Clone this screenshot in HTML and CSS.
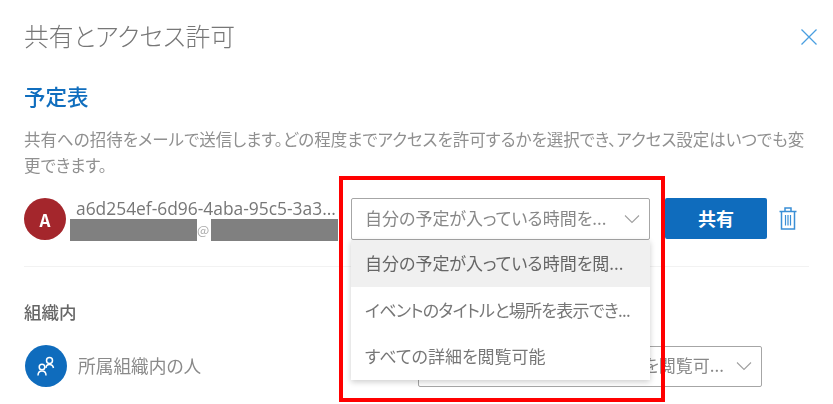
FILE: index.html
```html
<!DOCTYPE html>
<html lang="ja">
<head>
  <meta charset="UTF-8" />
  <title>共有とアクセス許可</title>
  <link rel="stylesheet" href="styles.css">
</head>
<body>
  <div class="dialog">
    <header class="dialog-head">
      <h1>共有とアクセス許可</h1>
      <svg class="close" width="16" height="16" viewBox="0 0 16 16"><path d="M0.500 0.500L15.500 15.500M15.500 0.500L0.500 15.500" stroke="#4a9fe0" stroke-width="1.300" fill="none"/></svg>
    </header>

    <h2>予定表</h2>
    <p class="desc">共有への招待をメールで送信します。どの程度までアクセスを許可するかを選択でき、アクセス設定はいつでも変更できます。</p>

    <div class="share-row">
      <div class="avatar red">A</div>
      <div class="who">
        <div class="who-name">a6d254ef-6d96-4aba-95c5-3a3...</div>
        <div class="who-mail"><span class="redact"></span><span class="at">@</span><span class="redact"></span></div>
      </div>
      <div class="select wide">
        <span>自分の予定が入っている時間を...</span>
        <svg width="16" height="10" viewBox="0 0 16 10"><path d="M1 1.500L8 8.500L15 1.500" stroke="#a0a0a0" stroke-width="1.100" fill="none"/></svg>
      </div>
      <button class="share-btn">共有</button>
      <svg class="trash" width="18" height="23" viewBox="0 0 18 23" fill="none" stroke="#3a8fd6" stroke-width="1.500"><path d="M0.500 4.500H17.500M6 4.500V1H12V4.500M2.500 4.500V22H15.500V4.500"/><path d="M6.500 8V18.500M9 8V18.500M11.500 8V18.500" stroke-width="1.200"/></svg>
    </div>

    <hr>

    <h3>組織内</h3>
    <div class="org-row">
      <div class="avatar blue">
        <svg width="22" height="22" viewBox="0 0 22 22" fill="none" stroke="#fff" stroke-width="1.500"><circle cx="14.500" cy="5.500" r="3"/><path d="M11 13C11 10.500 12.500 9.500 14.500 9.500C16.500 9.500 18 10.500 18.500 13"/><circle cx="7" cy="12" r="2.800"/><path d="M3 20.500C3 18 4.500 16 7 16C9.500 16 11 18 11 20.500"/></svg>
      </div>
      <div class="org-name">所属組織内の人</div>
      <div class="select org">
        <span>自分の予定が入っている時間を閲覧可...</span>
        <svg width="16" height="10" viewBox="0 0 16 10"><path d="M1 1.500L8 8.500L15 1.500" stroke="#a0a0a0" stroke-width="1.100" fill="none"/></svg>
      </div>
    </div>
  </div>

  <!-- dropdown open over the page -->
  <ul class="menu">
    <li class="on">自分の予定が入っている時間を閲...</li>
    <li class="tight">イベントのタイトルと場所を表示でき...</li>
    <li>すべての詳細を閲覧可能</li>
  </ul>

  <!-- red highlight on the screenshot -->
  <div class="mark"></div>
</body>
</html>
```

FILE: styles.css
```css
html, body {
  margin: 0;
  height: 404px;
  overflow: hidden;
  background: white;
}

body {
  font-family: "Noto Sans CJK JP", "Noto Sans", sans-serif;
  font-feature-settings: "palt";
  color: #777;
  position: relative;
}

/* the source picture is a soft upscale */
.dialog, .menu {
  filter: blur(0.35px);
}

.dialog {
  padding: 0 24px;
}

.dialog-head {
  display: flex;
  justify-content: space-between;
  align-items: center;
  height: 74px;
}

.dialog-head h1 {
  margin: 0 0 4px;
  font-size: 24.800px;
  font-weight: 300;
  color: #777;
}

.close {
  margin-right: -8px;
}

h2 {
  margin: -1px 0 0;
  height: 46px;
  line-height: 46px;
  font-size: 21.500px;
  font-weight: 500;
  color: #106ebe;
}

.desc {
  margin: 0;
  padding-top: 7px;
  font-size: 16.500px;
  line-height: 26px;
  color: #909090;
}

.share-row {
  display: flex;
  align-items: flex-start;
  margin-top: 20px;
  height: 42px;
}

.avatar {
  width: 42px;
  height: 42px;
  border-radius: 50%;
  flex: none;
  display: flex;
  align-items: center;
  justify-content: center;
  color: white;
}

.avatar.red {
  background: #a4262c;
  font-size: 17px;
  font-weight: 700;
}

.avatar.blue {
  background: #0f6cbd;
  margin-left: 1px;
}

.who {
  width: 281px;
  margin-left: 4px;
  flex: none;
}

.who-name {
  padding-left: 6px;
  font-family: "Open Sans", sans-serif;
  font-size: 17.400px;
  line-height: 21px;
  color: #777;
  white-space: nowrap;
}

.who-mail {
  display: flex;
  height: 22px;
  color: #aaa;
  font-size: 13px;
  line-height: 22px;
}

.redact {
  width: 127px;
  background: #808080;
}

.at {
  width: 14px;
}

.select {
  box-sizing: border-box;
  height: 42px;
  border: 1px solid #a6a6a6;
  border-radius: 2px;
  background: white;
  display: flex;
  align-items: center;
  justify-content: space-between;
  font-size: 17px;
  line-height: 38px;
  color: #888;
  white-space: nowrap;
  overflow: hidden;
}

.select span {
  padding-bottom: 2px;
}

.select.wide {
  width: 299px;
  flex: none;
  padding: 0 9px 0 13px;
}

.share-btn {
  width: 102px;
  height: 41px;
  margin-left: 15px;
  padding: 0 0 2px;
  border: none;
  border-radius: 2px;
  background: #0f6cbd;
  color: white;
  font-family: inherit;
  font-size: 18px;
  font-weight: 700;
  flex: none;
}

.trash {
  margin: 9px 0 0 12px;
  flex: none;
}

hr {
  border: none;
  border-top: 1px solid #f2f2f2;
  margin: 26px 0 0;
}

h3 {
  margin: 33px 0 0;
  height: 24px;
  line-height: 24px;
  font-size: 17.500px;
  font-weight: 500;
  color: #666;
}

.org-row {
  display: flex;
  align-items: center;
  margin-top: 21px;
}

.org-name {
  width: 340px;
  margin-left: 11px;
  padding-bottom: 3px;
  font-size: 17.700px;
  color: #8a8a8a;
  flex: none;
}

.select.org {
  width: 344px;
  height: 41px;
  flex: none;
  padding: 0 9px 0 0;
}

.select.org span {
  width: 305px;
  text-align: right;
}

.menu {
  position: absolute;
  left: 351px;
  top: 240px;
  width: 299px;
  margin: 0;
  padding: 0;
  list-style: none;
  background: white;
  box-shadow: 0 2px 6px rgba(0, 0, 0, 0.2);
  font-size: 17px;
  color: #777;
}

.menu li {
  height: 46.700px;
  line-height: 46px;
  padding-left: 14px;
  white-space: nowrap;
}

.menu li.on {
  background: #f0f0f0;
  color: #666;
}

.menu li.tight {
  letter-spacing: -0.700px;
}

.mark {
  position: absolute;
  left: 339px;
  top: 176px;
  width: 318px;
  height: 218px;
  border: 4px solid #f00;
}
```
